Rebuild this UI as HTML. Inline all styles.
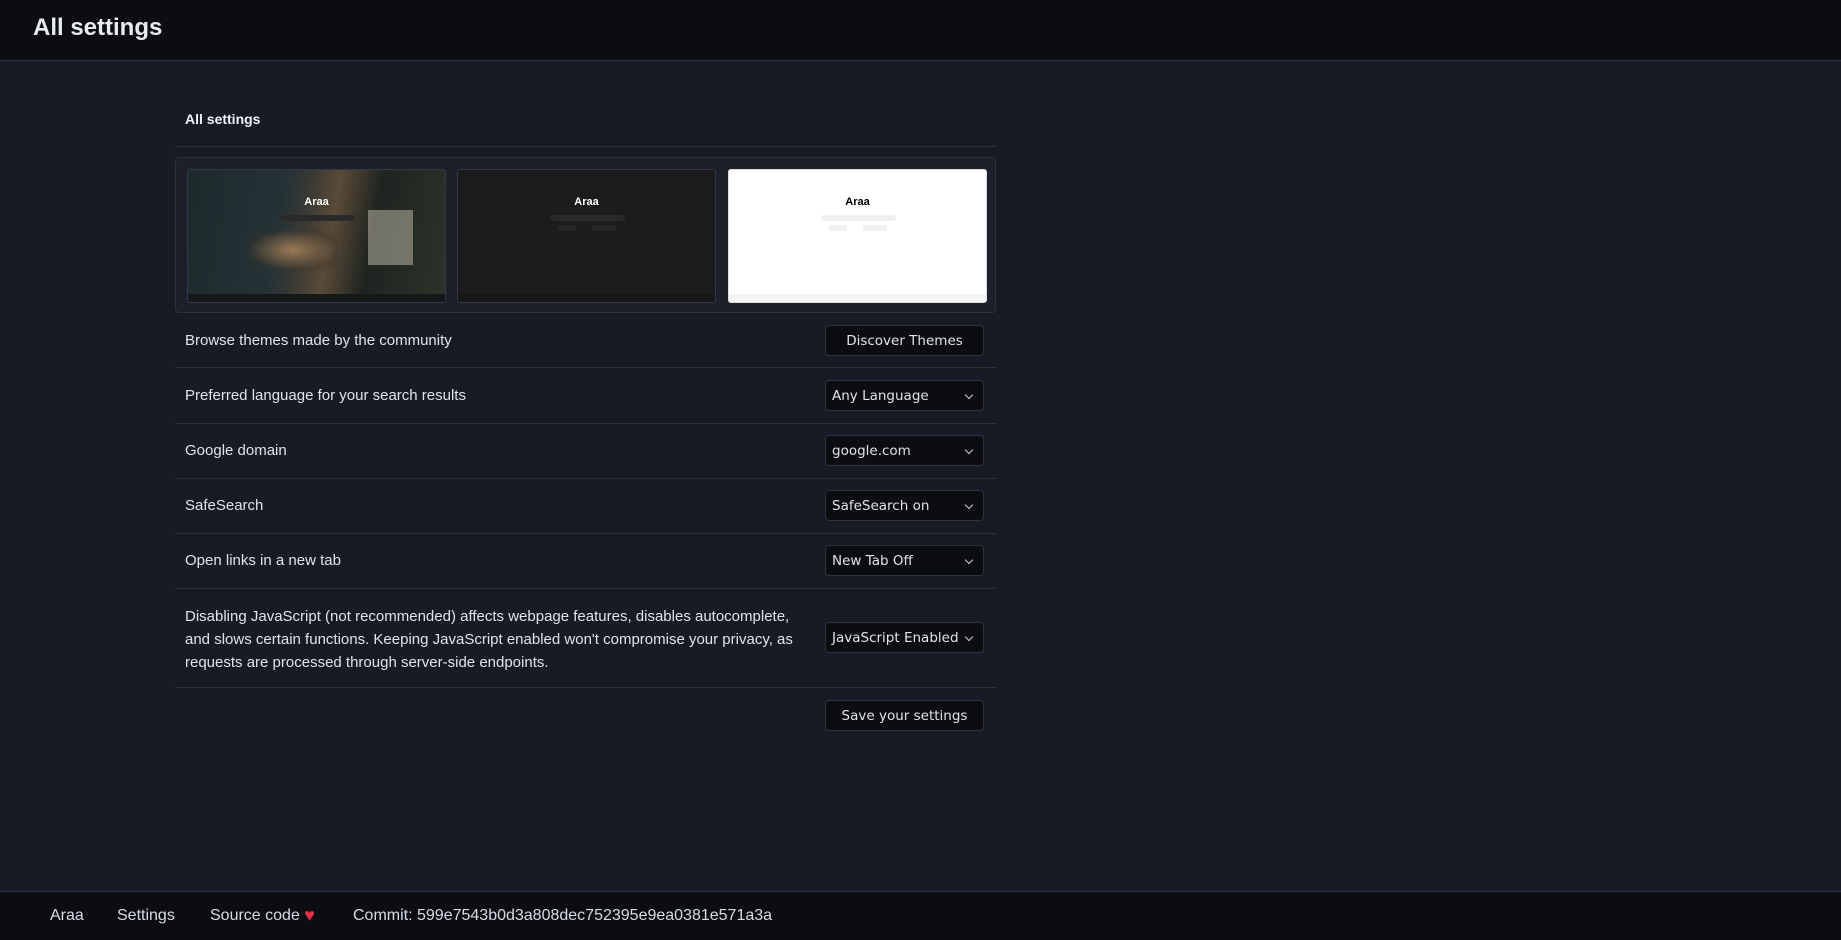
<!DOCTYPE html>
<html><head><meta charset="utf-8"><style>
*{box-sizing:border-box;margin:0;padding:0}
body{width:1841px;height:940px;background:#181b25;font-family:"Liberation Sans",sans-serif;color:#e3e6ee;position:relative;overflow:hidden}
.hdr{position:absolute;left:0;top:0;width:1841px;height:61px;background:#0c0d10;border-bottom:1px solid #2c303a}
.hdr h1{position:absolute;left:33px;top:14px;font-size:24px;font-weight:bold;color:#e8ebf2}
.t{position:absolute;font-size:15px;color:#dfe3ec}
.line{position:absolute;left:175px;width:821px;height:1px;background:#2c303a}
.btn{position:absolute;left:825px;width:159px;height:31px;background:#0c0d10;border:1px solid #2e323c;border-radius:4px;font-family:"DejaVu Sans",sans-serif;font-size:13.5px;color:#dfe3ec;line-height:30px}
.btn.c{text-align:center}
.btn.s{padding-left:6px}
.btn.s:after{content:"";position:absolute;right:11px;top:11px;width:5px;height:5px;border-right:1.5px solid #ccc;border-bottom:1.5px solid #ccc;transform:rotate(45deg)}
.thm{position:absolute;top:169px;width:259px;height:134px;border:1px solid #333845;border-radius:3px;overflow:hidden}
.thm .n{position:absolute;left:0;right:0;top:26px;text-align:center;font-size:11px;font-weight:bold}
.thm .sb{position:absolute;left:92px;top:45px;width:75px;height:6px;border-radius:3px}
.thm .b{position:absolute;top:55px;height:6px;width:18px}
.thm .f{position:absolute;left:0;right:0;bottom:0;height:8px}
.ft{position:absolute;left:0;top:891px;width:1841px;height:49px;background:#0c0d10;border-top:1px solid #2c303a}
.ft>span{position:absolute;top:14px;font-size:16px;line-height:20px;height:20px;color:#d6dbe6}
.hr{color:#e0304a;font-size:18px;line-height:0;vertical-align:-1px}
</style></head><body>
<div class="hdr"><h1>All settings</h1></div>
<div class="t" style="left:185px;top:111px;font-weight:bold;font-size:14px;color:#f0f2f7">All settings</div>
<div class="line" style="top:146px"></div>
<div style="position:absolute;left:175px;top:157px;width:821px;height:156px;background:#1c202a;border:1px solid #2e323d;border-radius:4px"></div>
<div class="thm" style="left:187px;background:linear-gradient(100deg,#1d2a2c 0%,#243236 35%,#3a3a34 45%,#5a4a38 55%,#1e2420 70%,#2c332a 100%)">
<div style="position:absolute;left:60px;top:60px;width:90px;height:40px;background:radial-gradient(ellipse at center,#9a7a55 0%,rgba(60,50,40,0.3) 70%,transparent 100%)"></div>
<div style="position:absolute;left:180px;top:40px;width:45px;height:55px;background:#c8c0b0;opacity:.5"></div>
<div class="n" style="color:#fff">Araa</div><div class="sb" style="background:#2a2a2a"></div><div class="f" style="background:#15181a"></div></div>
<div class="thm" style="left:457px;background:#1c1c1c">
<div class="n" style="color:#fff">Araa</div><div class="sb" style="background:#2a2a2a"></div>
<div class="b" style="left:100px;background:#262626"></div><div class="b" style="left:134px;width:24px;background:#262626"></div>
<div class="f" style="background:#161616"></div></div>
<div class="thm" style="left:728px;background:#fff;border-color:#ddd">
<div class="n" style="color:#000">Araa</div><div class="sb" style="background:#f0f0f0"></div>
<div class="b" style="left:100px;background:#f2f2f2"></div><div class="b" style="left:134px;width:24px;background:#f2f2f2"></div>
<div class="f" style="background:#f4f4f4"></div></div>

<div class="t" style="left:185px;top:332px">Browse themes made by the community</div>
<div class="btn c" style="top:325px">Discover Themes</div>
<div class="line" style="top:367px"></div>
<div class="t" style="left:185px;top:387px">Preferred language for your search results</div>
<div class="btn s" style="top:380px">Any Language</div>
<div class="line" style="top:423px"></div>
<div class="t" style="left:185px;top:442px">Google domain</div>
<div class="btn s" style="top:435px">google.com</div>
<div class="line" style="top:478px"></div>
<div class="t" style="left:185px;top:497px">SafeSearch</div>
<div class="btn s" style="top:490px">SafeSearch on</div>
<div class="line" style="top:533px"></div>
<div class="t" style="left:185px;top:552px">Open links in a new tab</div>
<div class="btn s" style="top:545px">New Tab Off</div>
<div class="line" style="top:588px"></div>
<div class="t" style="left:185px;top:605px;width:615px;line-height:23px">Disabling JavaScript (not recommended) affects webpage features, disables autocomplete, and slows certain functions. Keeping JavaScript enabled won't compromise your privacy, as requests are processed through server-side endpoints.</div>
<div class="btn s" style="top:622px">JavaScript Enabled</div>
<div class="line" style="top:687px"></div>
<div class="btn c" style="top:700px">Save your settings</div>

<div class="ft">
<span style="left:50px">Araa</span>
<span style="left:117px">Settings</span>
<span style="left:210px">Source code <span class="hr">♥</span></span>
<span style="left:353px">Commit: 599e7543b0d3a808dec752395e9ea0381e571a3a</span>
</div>
</body></html>
